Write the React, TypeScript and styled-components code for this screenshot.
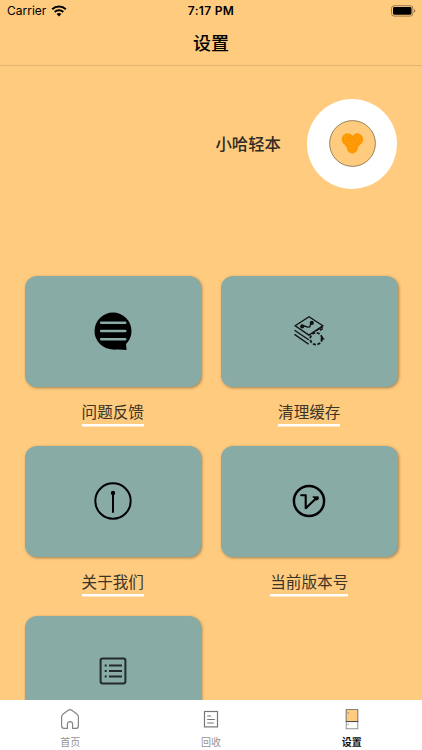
import React from 'react';
import styled, { createGlobalStyle } from 'styled-components';

const GlobalStyle = createGlobalStyle`
  * { box-sizing: border-box; }
  body { margin: 0; overflow: hidden; }
`;

const Screen = styled.div`
  width: 422px;
  height: 750px;
  display: flex;
  flex-direction: column;
  overflow: hidden;
  background: #ffcb7f;
  color: #000;
  font-family: Inter, 'Noto Sans CJK SC', sans-serif;
`;

const Header = styled.header`
  flex: none;
  height: 66px;
  border-bottom: 1px solid #e3b571;
`;

const StatusBar = styled.div`
  height: 22px;
  padding: 0 6px 0 7px;
  display: grid;
  grid-template-columns: 1fr auto 1fr;
  align-items: center;
  font-size: 12px;
  line-height: 22px;
`;

const Carrier = styled.div`
  display: flex;
  align-items: center;
  gap: 5px;
  letter-spacing: 0;
`;

const Clock = styled.div`
  font-weight: 600;
  letter-spacing: 0.3px;
  margin-right: 1px;
`;

const Battery = styled.div`
  display: flex;
  justify-content: flex-end;
`;

const Title = styled.h1`
  margin: 0;
  height: 43px;
  line-height: 43px;
  text-align: center;
  font-size: 18px;
  font-weight: 500;
`;

const Content = styled.main`
  flex: 1;
  min-height: 0;
  overflow: hidden;
`;

const Profile = styled.section`
  height: 210px;
  padding: 33px 25px 0 0;
  display: flex;
  justify-content: flex-end;
  align-items: flex-start;
  gap: 26px;
`;

const UserName = styled.div`
  line-height: 90px;
  font-size: 16.4px;
  font-weight: 500;
  color: #302c24;
`;

const Avatar = styled.div`
  width: 90px;
  height: 90px;
  border-radius: 50%;
  background: #fff;
  display: flex;
  align-items: center;
  justify-content: center;
`;

const Grid = styled.section`
  display: grid;
  grid-template-columns: 176.5px 176.5px;
  grid-auto-rows: 170px;
  column-gap: 20px;
  padding-left: 24.5px;
`;

const Item = styled.div`
  display: flex;
  flex-direction: column;
  align-items: center;
`;

const Card = styled.div`
  width: 100%;
  height: 111px;
  padding-bottom: 1px;
  border-radius: 12px;
  background: #88aba5;
  box-shadow: 1px 1px 3px rgba(70, 55, 30, 0.5);
  display: flex;
  align-items: center;
  justify-content: center;
`;

const Label = styled.div`
  margin-top: 14px;
  height: 26px;
  line-height: 23px;
  font-size: 15.6px;
  color: #3c3427;
  background: linear-gradient(#fff, #fff) 0 23px / 100% 2.5px no-repeat;
`;

const TabBar = styled.nav`
  flex: none;
  height: 50px;
  background: #fff;
  display: grid;
  grid-template-columns: repeat(3, 1fr);
`;

const Tab = styled.div<{ $active?: boolean }>`
  display: flex;
  flex-direction: column;
  align-items: center;
  padding-top: 8px;
  gap: 5px;
  font-size: 10px;
  line-height: 15px;
  font-weight: ${(p) => (p.$active ? 700 : 400)};
  color: ${(p) => (p.$active ? '#111' : '#949494')};
`;

const WifiIcon = () => (
  <svg width="16" height="12" viewBox="0 0 16 12">
    <path d="M1.2 4.3a9.8 9.8 0 0 1 13.6 0" fill="none" stroke="#000" strokeWidth="2.1" />
    <path d="M3.7 7a6.2 6.2 0 0 1 8.6 0" fill="none" stroke="#000" strokeWidth="1.9" />
    <path d="M5.6 9.1a3.5 3.5 0 0 1 4.8 0L8 11.6z" />
  </svg>
);

const BatteryIcon = () => (
  <svg width="25" height="12" viewBox="0 0 25 12">
    <rect x="0.5" y="0.7" width="21.4" height="10.4" rx="2.7" fill="none" stroke="#997a4c" />
    <rect x="2" y="2.1" width="18.5" height="7.6" rx="1.4" />
    <path d="M23.2 4.2c1.5.6 1.5 2.8 0 3.4z" fill="#806640" />
  </svg>
);

const HEART_DOTS = [
  [15.5, 16.5], [19, 15.8], [16.8, 19.5], [20.3, 18.8], [26, 16], [29.5, 17.4],
  [27.4, 19.6], [23.5, 20.6], [19.2, 22.4], [22, 24.4], [25.8, 23], [21.6, 27.8], [25, 27],
];

const HeartBadge = () => (
  <svg width="47" height="48" viewBox="0 0 47 48">
    <circle cx="23.5" cy="23.5" r="22.9" fill="#ffcb7f" stroke="#806c49" strokeWidth="0.8" />
    <g fill="#ff9800">
      <circle cx="18.6" cy="19.2" r="5.9" />
      <circle cx="28.2" cy="19.2" r="5.9" />
      <ellipse cx="23.3" cy="27.6" rx="5.6" ry="5.9" />
      <path d="M14.2 23L17.8 27.4h11l3.8-4.4-9.2-5z" />
    </g>
    {HEART_DOTS.map(([x, y]) => (
      <circle key={`${x}-${y}`} cx={x} cy={y} r="0.65" fill="#f4ac36" />
    ))}
  </svg>
);

const FeedbackIcon = () => (
  <svg width="38" height="38" viewBox="0 0 38 38">
    <circle cx="19" cy="19" r="18.5" />
    <path d="M19 37.4c3.5.2 8 .2 13.6.5l-.8-7.9z" />
    <path d="M7.2 10.8h24M7.2 19h24M7.2 27.3h24" stroke="#88aba5" strokeWidth="2.6" strokeLinecap="round" />
  </svg>
);

const CacheIcon = () => (
  <svg width="32" height="32" viewBox="0 0 32 32" fill="none" stroke="#111" strokeWidth="1.35">
    <path d="M2.2 10.7L16 1.7l13.8 9-10.5 7.2-3.4 2.2z" />
    <path d="M1.5 15.2l14.2 9.5M1.5 19.4l14.2 9.8M23 16l6.8-4.4" />
    <path d="M9 11.6c3.4-2.2 4.5 1.2 7.1.5 2.2-.7.2-3 2.5-4.6" />
    <circle cx="9.2" cy="11.4" r="1.4" fill="#111" />
    <circle cx="18.8" cy="7.9" r="1.4" fill="#111" />
    <circle cx="23.1" cy="23.7" r="5.9" strokeWidth="1.8" strokeDasharray="3 1.63" />
    <path d="M26.9 24.4l2.6-3 2.3 3z" fill="#111" stroke="none" />
    <path d="M27 15.4l2.8-1.7" />
  </svg>
);

const AboutIcon = () => (
  <svg width="38" height="38" viewBox="0 0 38 38">
    <circle cx="19" cy="19" r="17.7" fill="none" stroke="#000" strokeWidth="2" />
    <circle cx="19" cy="11" r="2.2" />
    <path d="M19 11v19" stroke="#000" strokeWidth="2" strokeLinecap="round" />
  </svg>
);

const VersionIcon = () => (
  <svg width="34" height="34" viewBox="0 0 34 34" fill="none" stroke="#000" strokeWidth="2.5">
    <circle cx="17" cy="17" r="15.1" />
    <path d="M9.2 11.3h4.5v12.9l10.6-10" strokeWidth="2.1" strokeLinecap="round" strokeLinejoin="round" />
    <path d="M20.8 12.8h5.5v2.4l-2.2 1z" fill="#000" strokeWidth="0.8" strokeLinejoin="round" />
  </svg>
);

const ListIcon = () => (
  <svg width="28" height="28" viewBox="0 0 28 28" fill="none" stroke="#222b29">
    <rect x="1.6" y="1.6" width="24.8" height="24.8" rx="1.8" strokeWidth="2" />
    <path d="M10 8.5h13M10 14h13M10 19.5h13" strokeWidth="1.8" />
    <path d="M5.7 8.5h2M5.7 14h2M5.7 19.5h2" strokeWidth="1.8" />
  </svg>
);

const HomeIcon = () => (
  <svg width="20" height="22" viewBox="0 0 20 22" fill="none" stroke="#858585" strokeWidth="1.2">
    <path d="M7.4 20.4H4.1c-2 0-2.5-1-2.5-3V9.2c0-1.6.5-2.3 1.6-3.2l5-3.8c1.2-.9 2.4-.9 3.6 0l5 3.8c1.1.9 1.6 1.6 1.6 3.2v8.2c0 2-.5 3-2.5 3h-3.3v-4.2c0-3.5-5.2-3.5-5.2 0z" strokeLinejoin="round" />
  </svg>
);

const RecycleIcon = () => (
  <svg width="16" height="22" viewBox="0 0 16 22" fill="none" stroke="#777" strokeWidth="1.2">
    <rect x="1.5" y="3.5" width="13" height="15.4" />
    <path d="M4.2 8h4M4.2 11.5h7.7M4.2 15h6.5" />
  </svg>
);

const SettingsIcon = () => (
  <svg width="14" height="22" viewBox="0 0 14 22" stroke="#777" strokeWidth="0.8">
    <rect x="1.2" y="1.6" width="11.6" height="19.2" fill="#fff" />
    <rect x="1.2" y="1.6" width="11.6" height="12" fill="#ffcb7f" />
    <path d="M0.8 13.6h12.4" stroke="#333" />
    <path d="M3.2 4v1.7M3.2 15.5v1.7" />
  </svg>
);

const ITEMS = [
  { label: '问题反馈', icon: <FeedbackIcon /> },
  { label: '清理缓存', icon: <CacheIcon /> },
  { label: '关于我们', icon: <AboutIcon /> },
  { label: '当前版本号', icon: <VersionIcon /> },
  { label: '', icon: <ListIcon /> },
];

export default function App() {
  return (
    <Screen>
      <GlobalStyle />
      <Header>
        <StatusBar>
          <Carrier>Carrier <WifiIcon /></Carrier>
          <Clock>7:17 PM</Clock>
          <Battery><BatteryIcon /></Battery>
        </StatusBar>
        <Title>设置</Title>
      </Header>
      <Content>
        <Profile>
          <UserName>小哈轻本</UserName>
          <Avatar><HeartBadge /></Avatar>
        </Profile>
        <Grid>
          {ITEMS.map((item) => (
            <Item key={item.label}>
              <Card>{item.icon}</Card>
              {item.label && <Label>{item.label}</Label>}
            </Item>
          ))}
        </Grid>
      </Content>
      <TabBar>
        <Tab><HomeIcon />首页</Tab>
        <Tab><RecycleIcon />回收</Tab>
        <Tab $active><SettingsIcon />设置</Tab>
      </TabBar>
    </Screen>
  );
}
